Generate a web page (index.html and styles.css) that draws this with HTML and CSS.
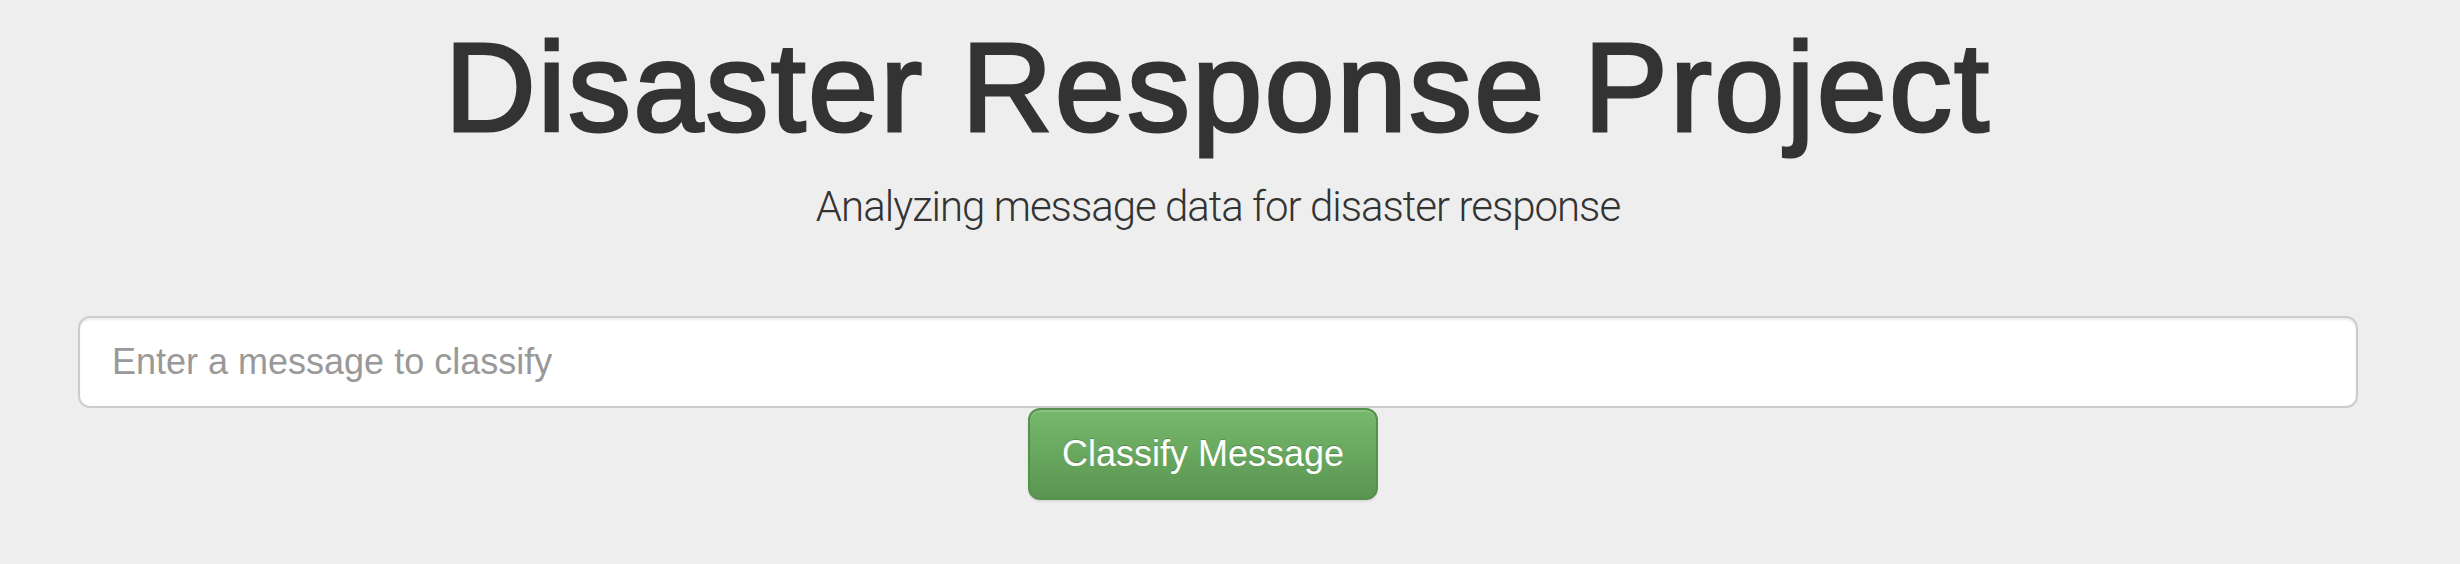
FILE: index.html
```html
<!DOCTYPE html>
<html lang="en">
<head>
<meta charset="utf-8">
<title>Disaster Response Project</title>
<link rel="stylesheet" href="styles.css">
</head>
<body>
<div class="jumbotron">
  <div class="container">
    <h1 class="title">Disaster Response Project</h1>
    <p class="lead">Analyzing message data for disaster response</p>
    <form class="classify-form">
      <input class="msg-input" type="text" name="query" placeholder="Enter a message to classify">
      <div class="btn-row">
        <button type="button" class="btn-success">Classify Message</button>
      </div>
    </form>
  </div>
</div>
</body>
</html>
```
FILE: styles.css
```css
html, body {
  margin: 0;
  padding: 0;
  background: #eeeeee;
}
body {
  font-family: "Liberation Sans", Arial, sans-serif;
  color: #333333;
  height: 564px;
  overflow: hidden;
}
.jumbotron {
  padding-top: 19px;
}
.container {
  width: 2280px;
  margin-left: 78px;
}
.title {
  margin: 0;
  font-size: 126px;
  line-height: 138.6px;
  font-weight: 400;
  letter-spacing: 2.2px;
  -webkit-text-stroke: 3px #333333;
  text-align: center;
  color: #333333;
}
.lead {
  margin: 17px 0 0 0;
  font-family: Roboto, "Liberation Sans", sans-serif;
  font-weight: 300;
  font-size: 42px;
  line-height: 63px;
  letter-spacing: -1px;
  text-align: center;
  color: #333333;
}
.classify-form {
  margin-top: 78px;
  display: flex;
  flex-direction: column;
}
.msg-input {
  box-sizing: border-box;
  width: 2280px;
  height: 92px;
  margin: 0;
  padding: 20px 32px;
  font-family: "Liberation Sans", Arial, sans-serif;
  font-size: 36px;
  color: #555555;
  background: #ffffff;
  border: 2px solid #cccccc;
  border-radius: 12px;
  box-shadow: inset 0 2px 2px rgba(0, 0, 0, 0.075);
  outline: none;
}
.msg-input::placeholder {
  color: #999999;
  opacity: 1;
}
.btn-row {
  display: flex;
  padding-left: 950px;
}
.btn-success {
  box-sizing: border-box;
  height: 92px;
  padding: 20px 32px;
  font-family: "Liberation Sans", Arial, sans-serif;
  font-size: 36px;
  line-height: 48px;
  color: #ffffff;
  text-shadow: 0 -1px 0 rgba(0, 0, 0, 0.2);
  background: linear-gradient(to bottom, #76b86c 0%, #5a9651 100%);
  border: 2px solid #55914c;
  border-radius: 12px;
  box-shadow: inset 0 2px 0 rgba(255, 255, 255, 0.15), 0 2px 2px rgba(0, 0, 0, 0.075);
  cursor: pointer;
}
```
